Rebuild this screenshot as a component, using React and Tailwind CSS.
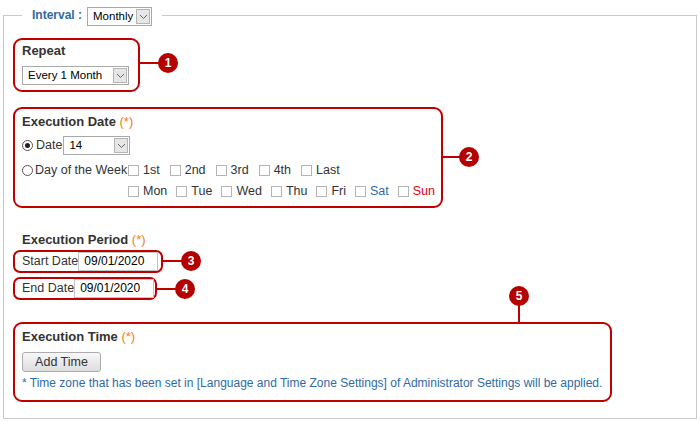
import React from 'react';

// small chevron used in the fake select boxes
const Chevron = () => (
  <svg width="9" height="6" viewBox="0 0 9 6">
    <path d="M1 1l3.5 3.5L8 1" fill="none" stroke="#666" strokeWidth="1" />
  </svg>
);

const Select = ({ value, className }) => (
  <div className={`flex h-[19px] shrink-0 items-stretch border border-[#a9a9a9] bg-white ${className}`}>
    <span className="flex-1 pl-[5px] text-[11.5px] leading-[17px] text-black whitespace-nowrap">{value}</span>
    <span className="m-[1px] flex w-[14px] items-center justify-center border border-[#b5b5b5] bg-[#e6e6e6]">
      <Chevron />
    </span>
  </div>
);

const Radio = ({ checked }) => (
  <span className="flex h-[11px] w-[11px] shrink-0 items-center justify-center rounded-full border border-[#555] bg-white">
    {checked && <span className="h-[5px] w-[5px] rounded-full bg-[#222]" />}
  </span>
);

const Check = ({ label, color = 'text-[#333]' }) => (
  <span className="flex items-center">
    <span className="h-[11px] w-[11px] shrink-0 border border-[#b4b4b4] bg-white" />
    <span className={`ml-[4px] ${color}`}>{label}</span>
  </span>
);

const Badge = ({ n, className }) => (
  <span className={`absolute flex h-[20px] w-[20px] items-center justify-center rounded-full bg-[#b50000] text-[12px] font-bold text-white ${className}`}>
    {n}
  </span>
);

const Star = () => <span className="font-normal text-[#f27c22]"> (*)</span>;

const DateInput = ({ value }) => (
  <div className="flex h-[19px] w-[80px] shrink-0 items-center border border-[#c4c4c4] bg-white pl-[5px] text-[12px] text-black">
    {value}
  </div>
);

export default function App() {
  return (
    <div className="h-[421px] w-[700px] overflow-hidden bg-white font-['Liberation_Sans',Arial,sans-serif] text-[12.5px] leading-[15px] text-[#333]">
      <fieldset className="ml-[3px] mt-[5px] h-[414px] w-[694px] border border-[#c9c9c9] p-0">
        <legend className="ml-[18px] px-[10px]">
          <div className="flex h-[21px] items-end">
            <span className="mb-[3px] text-[12px] font-bold text-[#2f6aa6]">Interval :</span>
            <Select value="Monthly" className="ml-[5px] w-[65px]" />
          </div>
        </legend>

        {/* Repeat */}
        <div className="relative ml-[9px] mt-[12px] h-[54px] w-[127px] rounded-[9px] border-2 border-[#c00000] pl-[7px] pt-[3px]">
          <div className="text-[13px] font-bold">Repeat</div>
          <Select value="Every 1 Month" className="mt-[8px] w-[107px]" />
          <div className="absolute left-[125px] top-[22px] h-[2px] w-[22px] bg-[#c00000]" />
          <Badge n="1" className="left-[143px] top-[13px]" />
        </div>

        {/* Execution Date */}
        <div className="relative ml-[9px] mt-[15px] h-[101px] w-[430px] rounded-[9px] border-2 border-[#c00000] pl-[7px] pt-[5px]">
          <div className="text-[13px] font-bold">
            Execution Date<Star />
          </div>
          <div className="mt-[7px] flex h-[19px] items-center">
            <Radio checked />
            <span className="ml-[3px]">Date</span>
            <Select value="14" className="ml-[1px] w-[67px]" />
          </div>
          <div className="mt-[8px] flex h-[15px] items-center">
            <div className="flex w-[106px] shrink-0 items-center">
              <Radio />
              <span className="ml-[2px] whitespace-nowrap">Day of the Week</span>
            </div>
            <div className="relative flex items-center gap-x-[10px] bg-white">
              <Check label="1st" />
              <Check label="2nd" />
              <Check label="3rd" />
              <Check label="4th" />
              <Check label="Last" />
            </div>
          </div>
          <div className="mt-[6px] flex h-[15px] items-center gap-x-[9px] pl-[106px]">
            <Check label="Mon" />
            <Check label="Tue" />
            <Check label="Wed" />
            <Check label="Thu" />
            <Check label="Fri" />
            <Check label="Sat" color="text-[#2f6aa6]" />
            <Check label="Sun" color="text-[#e00012]" />
          </div>
          <div className="absolute left-[426px] top-[47px] h-[2px] w-[22px] bg-[#c00000]" />
          <Badge n="2" className="left-[444px] top-[38px]" />
        </div>

        {/* Execution Period */}
        <div className="ml-[18px] mt-[24px] text-[13px] font-bold">
          Execution Period<Star />
        </div>
        <div className="relative ml-[9px] mt-[3px] flex h-[23px] w-[150px] items-center rounded-[7px] border-2 border-[#c00000] pl-[7px]">
          <span className="whitespace-nowrap">Start Date</span>
          <DateInput value="09/01/2020" />
          <div className="absolute left-[146px] top-[8px] h-[2px] w-[22px] bg-[#c00000]" />
          <Badge n="3" className="left-[166px] top-[-1px]" />
        </div>
        <div className="relative ml-[9px] mt-[4px] flex h-[23px] w-[144px] items-center rounded-[7px] border-2 border-[#c00000] pl-[7px]">
          <span className="whitespace-nowrap">End Date</span>
          <DateInput value="09/01/2020" />
          <div className="absolute left-[140px] top-[9px] h-[2px] w-[22px] bg-[#c00000]" />
          <Badge n="4" className="left-[160px] top-[0px]" />
        </div>

        {/* Execution Time */}
        <div className="relative ml-[9px] mt-[22px] h-[80px] w-[599px] rounded-[9px] border-2 border-[#c00000] pl-[7px] pt-[5px]">
          <div className="text-[13px] font-bold">
            Execution Time<Star />
          </div>
          <button className="mt-[8px] flex h-[20px] w-[79px] items-center justify-center rounded-[3px] border border-[#acacac] bg-linear-to-b from-[#f8f8f8] to-[#dddddd] text-[12.5px] text-[#333]">
            Add Time
          </button>
          <div className="mt-[4px] whitespace-nowrap text-[12px] text-[#2f6aa6]">
            * Time zone that has been set in [Language and Time Zone Settings] of Administrator Settings will be applied.
          </div>
          <div className="absolute left-[503px] top-[-28px] h-[28px] w-[2px] bg-[#c00000]" />
          <Badge n="5" className="left-[494px] top-[-38px]" />
        </div>
      </fieldset>
    </div>
  );
}
